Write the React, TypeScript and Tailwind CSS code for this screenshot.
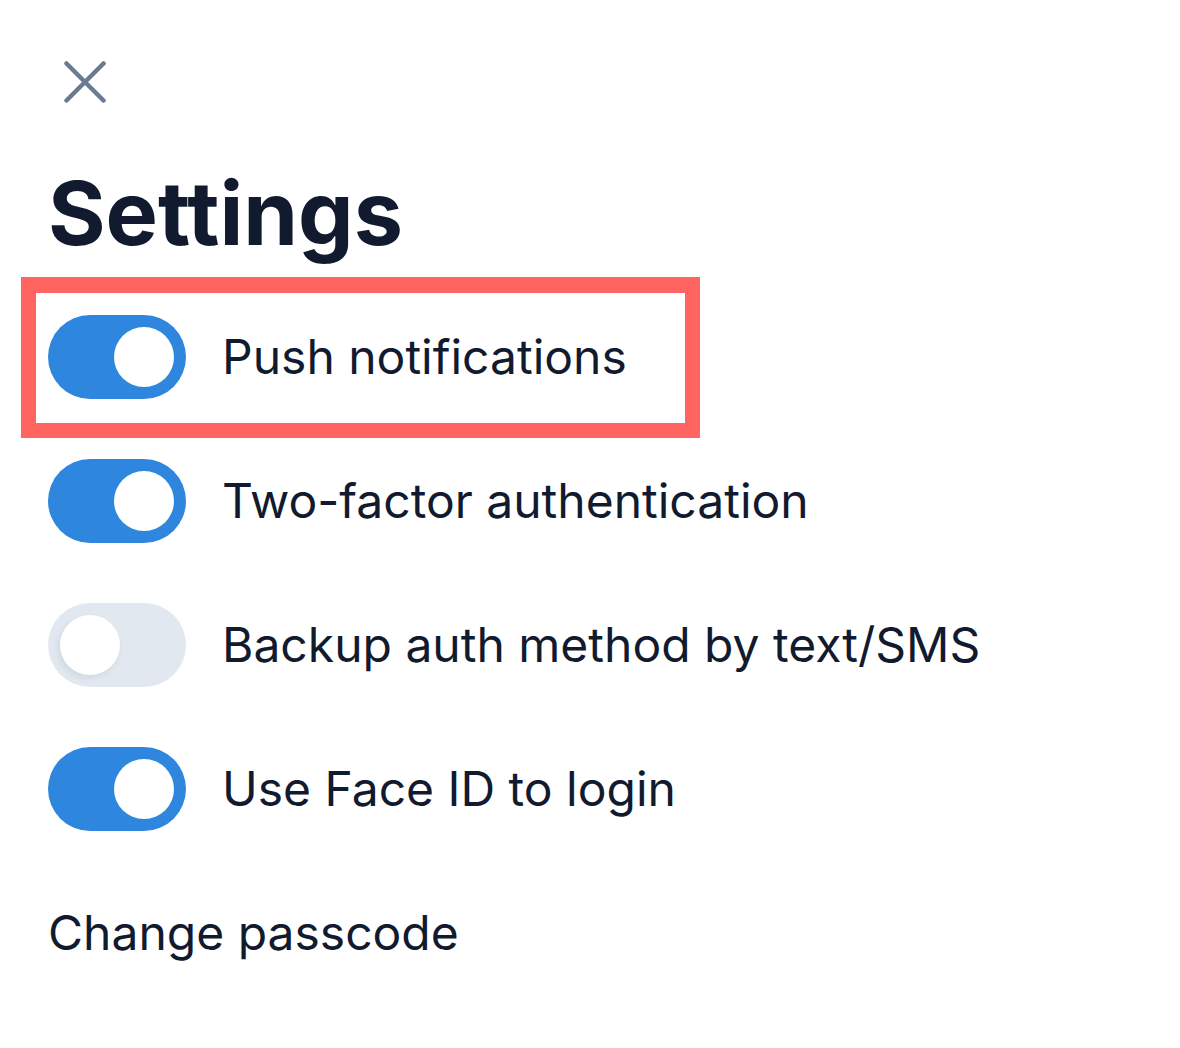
import { useState } from "react";

type Setting = {
  id: string;
  label: string;
  enabled: boolean;
};

const INITIAL_SETTINGS: Setting[] = [
  { id: "push", label: "Push notifications", enabled: true },
  { id: "2fa", label: "Two-factor authentication", enabled: true },
  { id: "sms", label: "Backup auth method by text/SMS", enabled: false },
  { id: "faceid", label: "Use Face ID to login", enabled: true },
];

const Toggle = ({ on, onChange }: { on: boolean; onChange: () => void }) => (
  <button
    type="button"
    role="switch"
    aria-checked={on}
    onClick={onChange}
    className={`flex h-[84px] w-[138px] shrink-0 items-center rounded-full px-3 ${
      on ? "justify-end bg-[#2e86de]" : "justify-start bg-[#e2e8f0]"
    }`}
  >
    <span
      className={`block h-[60px] w-[60px] rounded-full bg-white ${
        on ? "" : "shadow-[-2px_3px_6px_rgba(15,23,42,0.08)]"
      }`}
    />
  </button>
);

export default function App() {
  const [settings, setSettings] = useState(INITIAL_SETTINGS);

  const toggle = (id: string) =>
    setSettings((prev) =>
      prev.map((s) => (s.id === id ? { ...s, enabled: !s.enabled } : s))
    );

  return (
    <div
      className="min-h-[1048px] w-[1180px] bg-white pl-12 pt-[61px] text-[#111a2e]"
      style={{ fontFamily: "Inter, 'Noto Sans', sans-serif" }}
    >
      <button type="button" aria-label="Close" className="ml-4 block h-[42px] w-[42px]">
        <svg viewBox="0 0 42 42" width="42" height="42" fill="none">
          <path
            d="M2.5 2.5 L39.5 39.5 M39.5 2.5 L2.5 39.5"
            stroke="#6b7a93"
            strokeWidth="4.5"
            strokeLinecap="round"
          />
        </svg>
      </button>

      <h1 className="mt-[66px] text-[88px] font-bold leading-none">Settings</h1>

      <div className="mt-[58px] flex flex-col gap-[60px]">
        {settings.map((s, i) => (
          <div key={s.id} className="relative flex h-[84px] items-center gap-9">
            {i === 0 && (
              <div className="pointer-events-none absolute -top-[38px] left-[-27px] h-[161px] w-[679px] border-[15px] border-t-[16px] border-[#ff6461]" />
            )}
            <Toggle on={s.enabled} onChange={() => toggle(s.id)} />
            <span className="text-[48px] leading-[1.21]">{s.label}</span>
          </div>
        ))}
        <div className="flex h-[84px] items-center">
          <button type="button" className="text-[48px] leading-[1.21]">
            Change passcode
          </button>
        </div>
      </div>
    </div>
  );
}
